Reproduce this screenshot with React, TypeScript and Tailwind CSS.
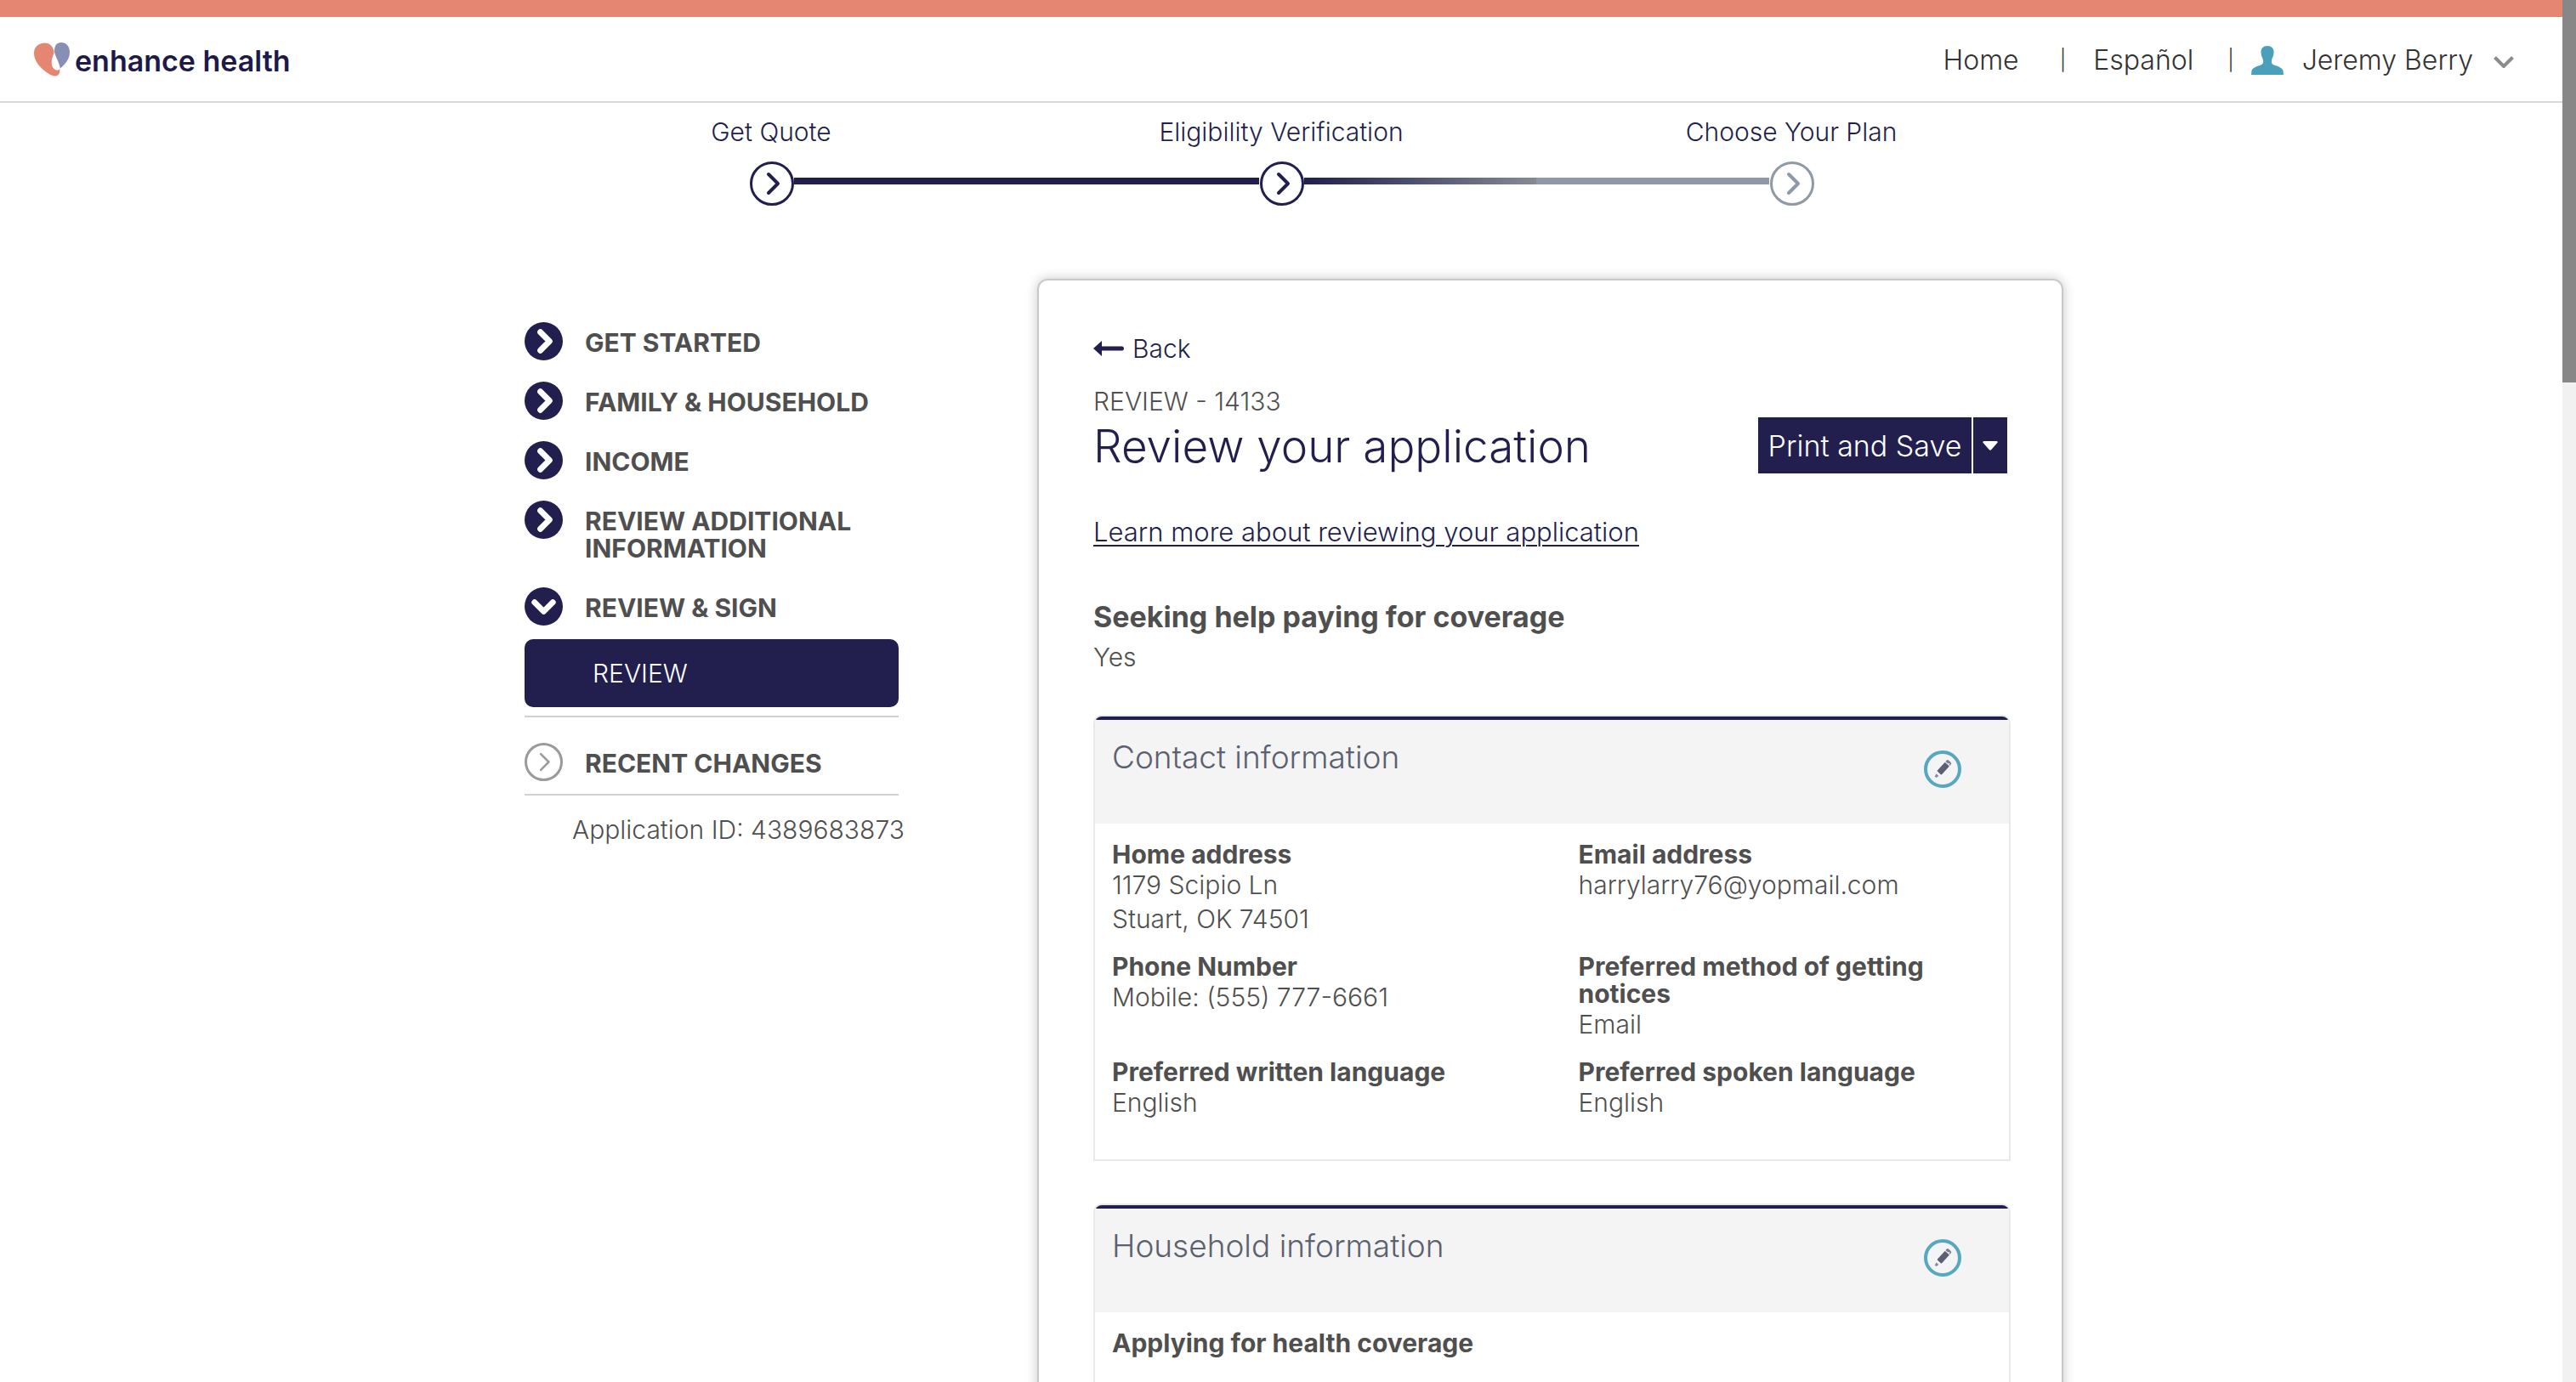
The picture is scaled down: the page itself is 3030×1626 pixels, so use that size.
import type { ReactNode } from "react";

function Logo() {
  return (
    <a href="#home" className="flex items-center gap-1.5 text-[#1d1a4b]">
      <svg viewBox="0 0 42 40" className="h-10 w-[42px]" aria-hidden="true">
        <path
          d="M13 0.5C5 0.5 0 5.500 0 12.500C0 21 6 28.500 14 34.500C18.500 37.800 22 39.500 25 39.500C28.500 39.500 30.800 36.500 30.300 31C29 33 27 33 25 32C21.500 30.300 20.500 26.500 20.800 22C21 17.500 23.800 14 23.400 10C22.500 5 18.500 0.500 13 0.500Z"
          fill="#e58673"
        />
        <path
          d="M32 0C26.500 0 24 4 24 10.500C24 15 29.500 22 30.800 30.500C36.500 26 42 19.500 42 11.500C42 4.500 38 0 32 0Z"
          fill="#878fb5"
        />
      </svg>
      <span className="pt-1 text-[34px] leading-10 font-semibold">enhance health</span>
    </a>
  );
}

function Chevron({ className, width, flip }: { className: string; width: number; flip?: boolean }) {
  return (
    <svg viewBox="0 0 46 46" className={className} aria-hidden="true">
      <path
        d={flip ? "M12 18L23 29L34 18" : "M19 12L30 23L19 34"}
        fill="none"
        stroke="currentColor"
        strokeWidth={width}
        strokeLinecap="round"
        strokeLinejoin="round"
      />
    </svg>
  );
}

function Header() {
  return (
    <header className="flex items-center justify-between border-t-[20px] border-b-2 border-t-[#e58673] border-b-[#d8d8d8] pr-[57px] pl-10">
      <div className="flex h-[99px] items-center">
        <Logo />
      </div>
      <nav className="flex items-center pt-0.5 text-[32px] leading-10 text-[#333]">
        <a href="#home">Home</a>
        <span className="mr-8 ml-12 text-[24px]">|</span>
        <a href="#es">Español</a>
        <span className="mr-5 ml-10 text-[24px]">|</span>
        <button type="button" className="flex items-center">
          <svg viewBox="0 0 38 34" className="mr-[22px] h-[34px] w-[38px]" aria-hidden="true">
            <path
              d="M19 0C14 0 11.500 3 11.500 7C11.500 11 12.500 13 13.500 15C14.300 17 14.500 20 13 21.500C10 23.500 2 24.500 0.500 29L0 34H38L37.500 29C36 24.500 28 23.500 25 21.500C23.500 20 23.700 17 24.500 15C25.500 13 26.500 11 26.500 7C26.500 3 24 0 19 0Z"
              fill="#4aa0bb"
            />
          </svg>
          Jeremy Berry
          <svg viewBox="0 0 24 14" className="mt-1 ml-6 h-3.5 w-6" aria-hidden="true">
            <path d="M1.500 1.500L12 12L22.500 1.500" fill="none" stroke="#8c8c8c" strokeWidth="4" />
          </svg>
        </button>
      </nav>
    </header>
  );
}

function Step({ label, circle, before, after }: { label: string; circle: string; before: string; after: string }) {
  return (
    <li className="flex flex-col items-center">
      <span className="text-[30px] leading-10 text-[#221f4e]">{label}</span>
      <div className="mt-[15px] flex w-full">
        <span className={`mt-[19px] mr-px h-2 flex-1 ${before}`} />
        <span className={`size-[52px] rounded-full border-[3px] ${circle}`}>
          <Chevron width={4} className="size-[46px]" />
        </span>
        <span className={`mt-[19px] h-2 flex-1 ${after}`} />
      </div>
    </li>
  );
}

function NavItem({ label, open, muted }: { label: string; open?: boolean; muted?: boolean }) {
  return (
    <button type="button" className="flex w-full items-start gap-[26px] text-left">
      <span
        className={
          muted
            ? "size-[45px] shrink-0 rounded-full border-[3px] border-[#9a9a9a] text-[#9a9a9a]"
            : "size-[45px] shrink-0 rounded-full bg-[#221f4e] text-white"
        }
      >
        <Chevron width={muted ? 3 : 7} flip={open} className="size-full" />
      </span>
      <span className="pt-2 pb-[5px] text-[30px] leading-8 font-bold">{label}</span>
    </button>
  );
}

function Sidebar() {
  return (
    <aside className="w-[440px] shrink-0 pt-[51px]">
      <ul className="flex flex-col gap-[25px]">
        <li><NavItem label="GET STARTED" /></li>
        <li><NavItem label="FAMILY & HOUSEHOLD" /></li>
        <li><NavItem label="INCOME" /></li>
        <li><NavItem label="REVIEW ADDITIONAL INFORMATION" /></li>
        <li><NavItem label="REVIEW & SIGN" open /></li>
      </ul>
      <a
        href="#review"
        className="mt-4 flex h-20 items-center rounded-[10px] bg-[#221f4e] pl-20 text-[30px] text-white"
      >
        REVIEW
      </a>
      <div className="mt-2.5 border-y-2 border-[#d0d0d0] pt-[30px] pb-[15px]">
        <NavItem label="RECENT CHANGES" muted />
      </div>
      <p className="mt-5 pl-14 text-[30px] leading-10 whitespace-nowrap">Application ID: 4389683873</p>
    </aside>
  );
}

function Panel({ title, children }: { title: string; children: ReactNode }) {
  return (
    <section className="overflow-hidden rounded-t-[10px] border-2 border-[#e5eaea]">
      <div className="flex h-[126px] items-start justify-between border-t-4 border-[#221f4e] bg-[#f4f4f4] pr-14 pl-5">
        <h2 className="pt-5 text-[37px] leading-[48px] font-light text-[#5b616f]">{title}</h2>
        <button type="button" aria-label={`Edit ${title}`} className="mt-9">
          <svg viewBox="0 0 44 44" className="size-11" aria-hidden="true">
            <circle cx="22" cy="22" r="20" fill="none" stroke="#55a8c0" strokeWidth="4" />
            <g transform="rotate(42 22 22)" fill="#5b6074">
              <path d="M18.500 13V11.500Q18.500 9.500 20.500 9.500H23.500Q25.500 9.500 25.500 11.500V13H24V11.500H22.800V13Z" opacity="0.8" />
              <rect x="18.500" y="14" width="7" height="14" rx="1" />
              <path d="M20 31H24L23.200 34.500H20.800Z" opacity="0.7" />
            </g>
          </svg>
        </button>
      </div>
      {children}
    </section>
  );
}

function Field({ label, lines }: { label: string; lines: string[] }) {
  return (
    <div>
      <dt className="text-[30px] leading-8 font-bold">{label}</dt>
      {lines.map((line) => (
        <dd key={line} className="text-[30px] leading-10">{line}</dd>
      ))}
    </div>
  );
}

function Fields({ items }: { items: { label: string; lines: string[] }[] }) {
  return (
    <dl className="grid grid-cols-2 gap-x-[78px] gap-y-5 pt-5 pr-9 pb-[47px] pl-5">
      {items.map((item) => (
        <Field key={item.label} {...item} />
      ))}
    </dl>
  );
}

const contact = [
  { label: "Home address", lines: ["1179 Scipio Ln", "Stuart, OK 74501"] },
  { label: "Email address", lines: ["harrylarry76@yopmail.com"] },
  { label: "Phone Number", lines: ["Mobile: (555) 777-6661"] },
  { label: "Preferred method of getting notices", lines: ["Email"] },
  { label: "Preferred written language", lines: ["English"] },
  { label: "Preferred spoken language", lines: ["English"] },
];

function Review() {
  return (
    <main className="ml-[163px] min-w-0 flex-1 rounded-t-xl border-2 border-[#c8c8c8] pt-[60px] pr-[60px] pb-16 pl-16 shadow-[0_0_14px_rgba(0,0,0,0.22)]">
      <a href="#back" className="flex w-fit items-center gap-2.5 text-[30px] leading-10 text-[#221f4e]">
        <svg viewBox="0 0 36 18" className="h-[18px] w-9" aria-hidden="true">
          <path d="M0 9L10 0V6.500H34Q36 6.500 36 9Q36 11.500 34 11.500H10V18Z" fill="currentColor" />
        </svg>
        Back
      </a>
      <p className="mt-[23px] text-[30px] leading-[38px]">REVIEW - 14133</p>
      <div className="flex items-start justify-between">
        <h1 className="text-[53px] leading-[68px] font-light text-[#221f4e]">Review your application</h1>
        <div className="mr-1 flex gap-0.5 text-white">
          <button type="button" className="h-[66px] w-[251px] bg-[#221f4e] text-[34px]">
            Print and Save
          </button>
          <button
            type="button"
            aria-label="More print options"
            className="flex h-[66px] w-10 items-center justify-center bg-[#221f4e]"
          >
            <svg viewBox="0 0 18 11" className="h-[11px] w-[18px]" aria-hidden="true">
              <path d="M1.500 0H16.500Q18.500 0.500 17.300 2L10.500 9.800Q9 11.500 7.500 9.800L0.700 2Q-0.500 0.500 1.500 0Z" fill="currentColor" />
            </svg>
          </button>
        </div>
      </div>
      <a
        href="#learn"
        className="mt-[47px] block w-fit text-[31px] leading-10 text-[#221f4e] underline decoration-2 underline-offset-4"
      >
        Learn more about reviewing your application
      </a>
      <h2 className="mt-14 text-[34px] leading-[48px] font-bold">Seeking help paying for coverage</h2>
      <p className="mt-[3px] text-[30px] leading-10">Yes</p>
      <div className="mt-12 flex flex-col gap-[50px]">
        <Panel title="Contact information">
          <Fields items={contact} />
        </Panel>
        <Panel title="Household information">
          <Fields items={[{ label: "Applying for health coverage", lines: [] }]} />
        </Panel>
      </div>
    </main>
  );
}

export default function App() {
  return (
    <div className="flex h-screen overflow-hidden bg-white font-['Inter',sans-serif] text-[#4f4f4f]">
      <div className="min-w-0 flex-1 font-light">
        <Header />
        <ol className="mx-auto grid max-w-[1800px] grid-cols-3 pt-3.5">
          <Step
            label="Get Quote"
            circle="border-[#221f4e] text-[#221f4e]"
            before="bg-transparent"
            after="bg-[#221f4e]"
          />
          <Step
            label="Eligibility Verification"
            circle="border-[#221f4e] text-[#221f4e]"
            before="bg-[#221f4e]"
            after="bg-linear-to-r from-[#221f4e] to-[#858b94]"
          />
          <Step
            label="Choose Your Plan"
            circle="border-[#8f99a6] text-[#8f99a6]"
            before="bg-[#8f99a6]"
            after="bg-transparent"
          />
        </ol>
        <div className="mx-auto mt-[86px] flex max-w-[1840px] items-start pl-[30px]">
          <Sidebar />
          <Review />
        </div>
      </div>
      <div className="w-4 shrink-0 bg-[#f1f1f1]" aria-hidden="true">
        <div className="h-[450px] bg-[#878787]" />
      </div>
    </div>
  );
}
